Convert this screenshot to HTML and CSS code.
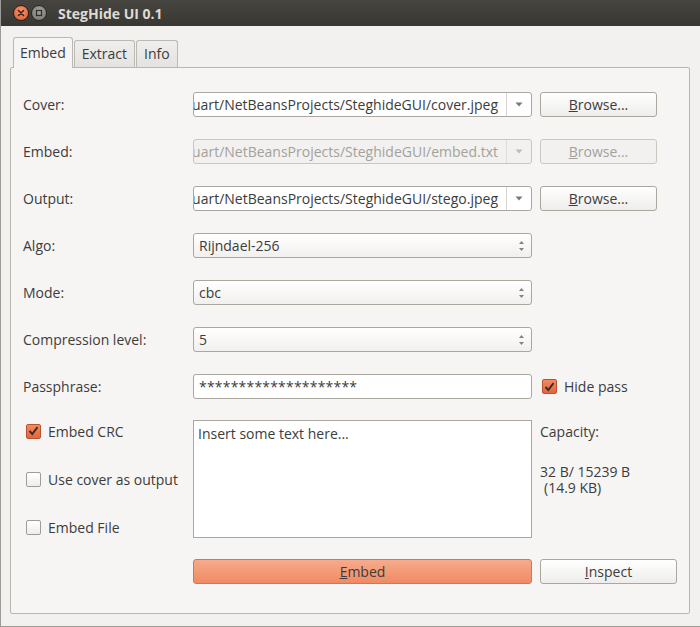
FILE: index.html
```html
<!DOCTYPE html>
<html lang="en">
<head>
    <meta charset="UTF-8">
    <title>SteghHide UI 0.1</title>
    <link rel="stylesheet" href="styles.css">
</head>
<body>
<div class="window">

    <header class="titlebar">
        <span class="win-btn close">
            <svg width="8" height="8" viewBox="0 0 8 8"><path d="M1.5 1.5 L6.5 6.5 M6.5 1.5 L1.5 6.5" stroke="#3a2519" stroke-width="1.6" stroke-linecap="round"/></svg>
        </span>
        <span class="win-btn mini">
            <svg width="8" height="8" viewBox="0 0 8 8"><rect x="1.5" y="1.5" width="5" height="5" fill="none" stroke="#2e2d2a" stroke-width="1.2"/></svg>
        </span>
        <span class="title">StegHide UI 0.1</span>
    </header>

    <div class="content">
        <nav class="tabs">
            <span class="tab active">Embed</span>
            <span class="tab">Extract</span>
            <span class="tab">Info</span>
        </nav>

        <div class="panel">
            <div class="form-grid">
                <!-- file rows -->
                <label class="lbl">Cover:</label>
                <div class="combo">
                    <div class="combo-text"><span>/home/stuart/NetBeansProjects/SteghideGUI/cover.jpeg</span></div>
                    <div class="combo-drop"><svg width="8" height="5" viewBox="0 0 8 5"><path d="M0.5 0.5 L7.5 0.5 L4 4.5 Z" fill="#7a7873"/></svg></div>
                </div>
                <div class="cell"><button class="btn browse"><u>B</u>rowse...</button></div>

                <label class="lbl">Embed:</label>
                <div class="combo disabled">
                    <div class="combo-text"><span>/home/stuart/NetBeansProjects/SteghideGUI/embed.txt</span></div>
                    <div class="combo-drop"><svg width="8" height="5" viewBox="0 0 8 5"><path d="M0.5 0.5 L7.5 0.5 L4 4.5 Z" fill="#bdbbb6"/></svg></div>
                </div>
                <div class="cell"><button class="btn browse disabled"><u>B</u>rowse...</button></div>

                <label class="lbl">Output:</label>
                <div class="combo">
                    <div class="combo-text"><span>/home/stuart/NetBeansProjects/SteghideGUI/stego.jpeg</span></div>
                    <div class="combo-drop"><svg width="8" height="5" viewBox="0 0 8 5"><path d="M0.5 0.5 L7.5 0.5 L4 4.5 Z" fill="#7a7873"/></svg></div>
                </div>
                <div class="cell"><button class="btn browse"><u>B</u>rowse...</button></div>

                <!-- option rows -->
                <label class="lbl">Algo:</label>
                <div class="select"><span>Rijndael-256</span><svg class="spin" width="7" height="12" viewBox="0 0 7 12"><path d="M3.5 1 L6 4 L1 4 Z M3.5 11 L6 8 L1 8 Z" fill="#85837e"/></svg></div>
                <div class="cell"></div>

                <label class="lbl">Mode:</label>
                <div class="select"><span>cbc</span><svg class="spin" width="7" height="12" viewBox="0 0 7 12"><path d="M3.5 1 L6 4 L1 4 Z M3.5 11 L6 8 L1 8 Z" fill="#85837e"/></svg></div>
                <div class="cell"></div>

                <label class="lbl">Compression level:</label>
                <div class="select"><span>5</span><svg class="spin" width="7" height="12" viewBox="0 0 7 12"><path d="M3.5 1 L6 4 L1 4 Z M3.5 11 L6 8 L1 8 Z" fill="#85837e"/></svg></div>
                <div class="cell"></div>

                <label class="lbl">Passphrase:</label>
                <div class="entry">********************</div>
                <div class="cell">
                    <span class="check on">
                        <svg width="11" height="10" viewBox="0 0 11 10"><path d="M1.5 5 L4.3 8 L9.5 1.2" fill="none" stroke="#3d2b22" stroke-width="1.9"/></svg>
                    </span>
                    <span class="check-text">Hide pass</span>
                </div>
            </div>

            <div class="lower">
                <div class="options">
                    <div class="opt">
                        <span class="check on">
                            <svg width="11" height="10" viewBox="0 0 11 10"><path d="M1.5 5 L4.3 8 L9.5 1.2" fill="none" stroke="#3d2b22" stroke-width="1.9"/></svg>
                        </span>
                        <span class="check-text">Embed CRC</span>
                    </div>
                    <div class="opt"><span class="check"></span><span class="check-text">Use cover as output</span></div>
                    <div class="opt"><span class="check"></span><span class="check-text">Embed File</span></div>
                </div>
                <div class="textbox">Insert some text here...</div>
                <div class="capacity">
                    <div class="cap-title">Capacity:</div>
                    <div class="cap-value">32 B/ 15239 B</div>
                    <div class="cap-kb">(14.9 KB)</div>
                </div>
            </div>

            <div class="actions">
                <button class="btn primary"><u>E</u>mbed</button>
                <button class="btn inspect"><u>I</u>nspect</button>
            </div>
        </div>
    </div>
</div>
</body>
</html>
```

FILE: styles.css
```css
:root {
    --text: #3c3c3c;
    --muted: #a3a19c;
    --border: #aaa79f;
    --window: #f2f1f0;
    --panel: #f6f5f4;
}

body {
    margin: 0;
    font-family: 'Open Sans', 'DejaVu Sans', sans-serif;
    font-size: 14px;
    color: var(--text);
    background: var(--window);
}

.window {
    width: 700px;
    height: 627px;
    box-sizing: border-box;
    border-left: 1px solid #9d9b96;
    border-bottom: 1px solid #9d9b96;
    background: var(--window);
    overflow: hidden;
}

/* Title bar */
.titlebar {
    height: 26px;
    display: flex;
    align-items: center;
    padding-left: 12px;
    background: linear-gradient(#46453f, #383733);
}

.win-btn {
    width: 16px;
    height: 16px;
    border-radius: 50%;
    display: flex;
    align-items: center;
    justify-content: center;
    box-sizing: border-box;
    margin-right: 2px;
}

.win-btn.close {
    background: radial-gradient(circle at 50% 35%, #f8916a, #df5b32);
    border: 1px solid #30201a;
}

.win-btn.mini {
    background: radial-gradient(circle at 50% 35%, #a3a19b, #74726d);
    border: 1px solid #2b2a27;
}

.title {
    margin-left: 9px;
    font-weight: bold;
    font-size: 14px;
    color: #dfdbd2;
}

/* Tabs + panel */
.content {
    padding: 11px 10px 0 9px;
}

.tabs {
    display: flex;
    align-items: flex-end;
    padding-left: 3px;
    height: 30px;
}

.tab {
    height: 27px;
    box-sizing: border-box;
    padding: 0 7px;
    line-height: 25px;
    border: 1px solid #bcb9b3;
    border-bottom: none;
    border-radius: 3px 3px 0 0;
    background: linear-gradient(#efeeec, #e4e3e0);
    margin-right: 1px;
}

.tab.active {
    height: 31px;
    padding: 0 6px;
    line-height: 29px;
    background: var(--panel);
    position: relative;
    margin-bottom: -1px;
    z-index: 1;
}

.panel {
    height: 547px;
    box-sizing: border-box;
    border: 1px solid #b9b6b0;
    border-radius: 2px;
    background: var(--panel);
    padding: 13px 0 0 12px;
}

.form-grid {
    display: grid;
    grid-template-columns: 162px 339px 137px;
    grid-auto-rows: 47px;
    column-gap: 8px;
    align-items: center;
}

.cell {
    display: flex;
    align-items: center;
}

/* Editable combo boxes */
.combo {
    display: flex;
    height: 25px;
    box-sizing: border-box;
    border: 1px solid var(--border);
    border-radius: 3px;
    background: #fff;
    overflow: hidden;
}

.combo-text {
    flex: 1;
    display: flex;
    justify-content: flex-end;
    align-items: center;
    overflow: hidden;
    white-space: nowrap;
    padding-right: 8px;
}

.combo-drop {
    width: 24px;
    border-left: 1px solid #d6d4cf;
    display: flex;
    align-items: center;
    justify-content: center;
}

.combo.disabled {
    background: #f2f1ef;
    border-color: #c9c6c0;
    color: var(--muted);
}

.combo.disabled .combo-drop {
    border-left-color: #dddbd6;
}

/* Non-editable selects */
.select {
    height: 25px;
    box-sizing: border-box;
    border: 1px solid var(--border);
    border-radius: 3px;
    background: linear-gradient(#ffffff, #f1f0ee);
    display: flex;
    align-items: center;
    justify-content: space-between;
    padding: 0 6px 0 5px;
}

.entry {
    height: 25px;
    box-sizing: border-box;
    border: 1px solid var(--border);
    border-radius: 3px;
    background: #fff;
    padding: 0 5px;
    line-height: 23px;
    letter-spacing: 0.2px;
}

/* Buttons */
.btn {
    font-family: inherit;
    font-size: 14px;
    color: var(--text);
    height: 25px;
    padding: 0;
    border: 1px solid var(--border);
    border-radius: 3px;
    background: linear-gradient(#ffffff, #eeedeb);
    cursor: pointer;
}

.btn.browse {
    width: 117px;
}

.btn.disabled {
    color: var(--muted);
    border-color: #cbc8c2;
    background: #f2f1ef;
}

.btn.primary {
    width: 339px;
    border-color: #c97b58;
    background: linear-gradient(#f6ab8c, #f08a62);
}

.btn.inspect {
    width: 137px;
}

/* Check boxes */
.check {
    width: 15px;
    height: 15px;
    box-sizing: border-box;
    border: 1px solid #9e9c96;
    border-radius: 2px;
    background: linear-gradient(#ffffff, #eeedeb);
    display: inline-flex;
    align-items: center;
    justify-content: center;
    flex-shrink: 0;
}

.check.on {
    border-color: #b9532f;
    background: linear-gradient(#f28a63, #e4653c);
}

.cell .check {
    margin-left: 2px;
}

.check-text {
    margin-left: 7px;
}

/* Lower area */
.lower {
    display: grid;
    grid-template-columns: 162px 339px 137px;
    column-gap: 8px;
    margin-top: 10px;
    height: 117px;
}

.options {
    display: flex;
    flex-direction: column;
    gap: 26px;
}

.opt {
    height: 22px;
    display: flex;
    align-items: center;
    padding-left: 3px;
}

.textbox {
    box-sizing: border-box;
    border: 1px solid var(--border);
    background: #fff;
    padding: 4px 4px;
    line-height: 18px;
}

.capacity {
    padding-top: 3px;
}

.cap-title {
    line-height: 18px;
}

.cap-value {
    margin-top: 23px;
    line-height: 16px;
}

.cap-kb {
    line-height: 16px;
    padding-left: 4px;
}

.actions {
    display: flex;
    gap: 8px;
    margin-top: 22px;
    padding-left: 170px;
}
```
